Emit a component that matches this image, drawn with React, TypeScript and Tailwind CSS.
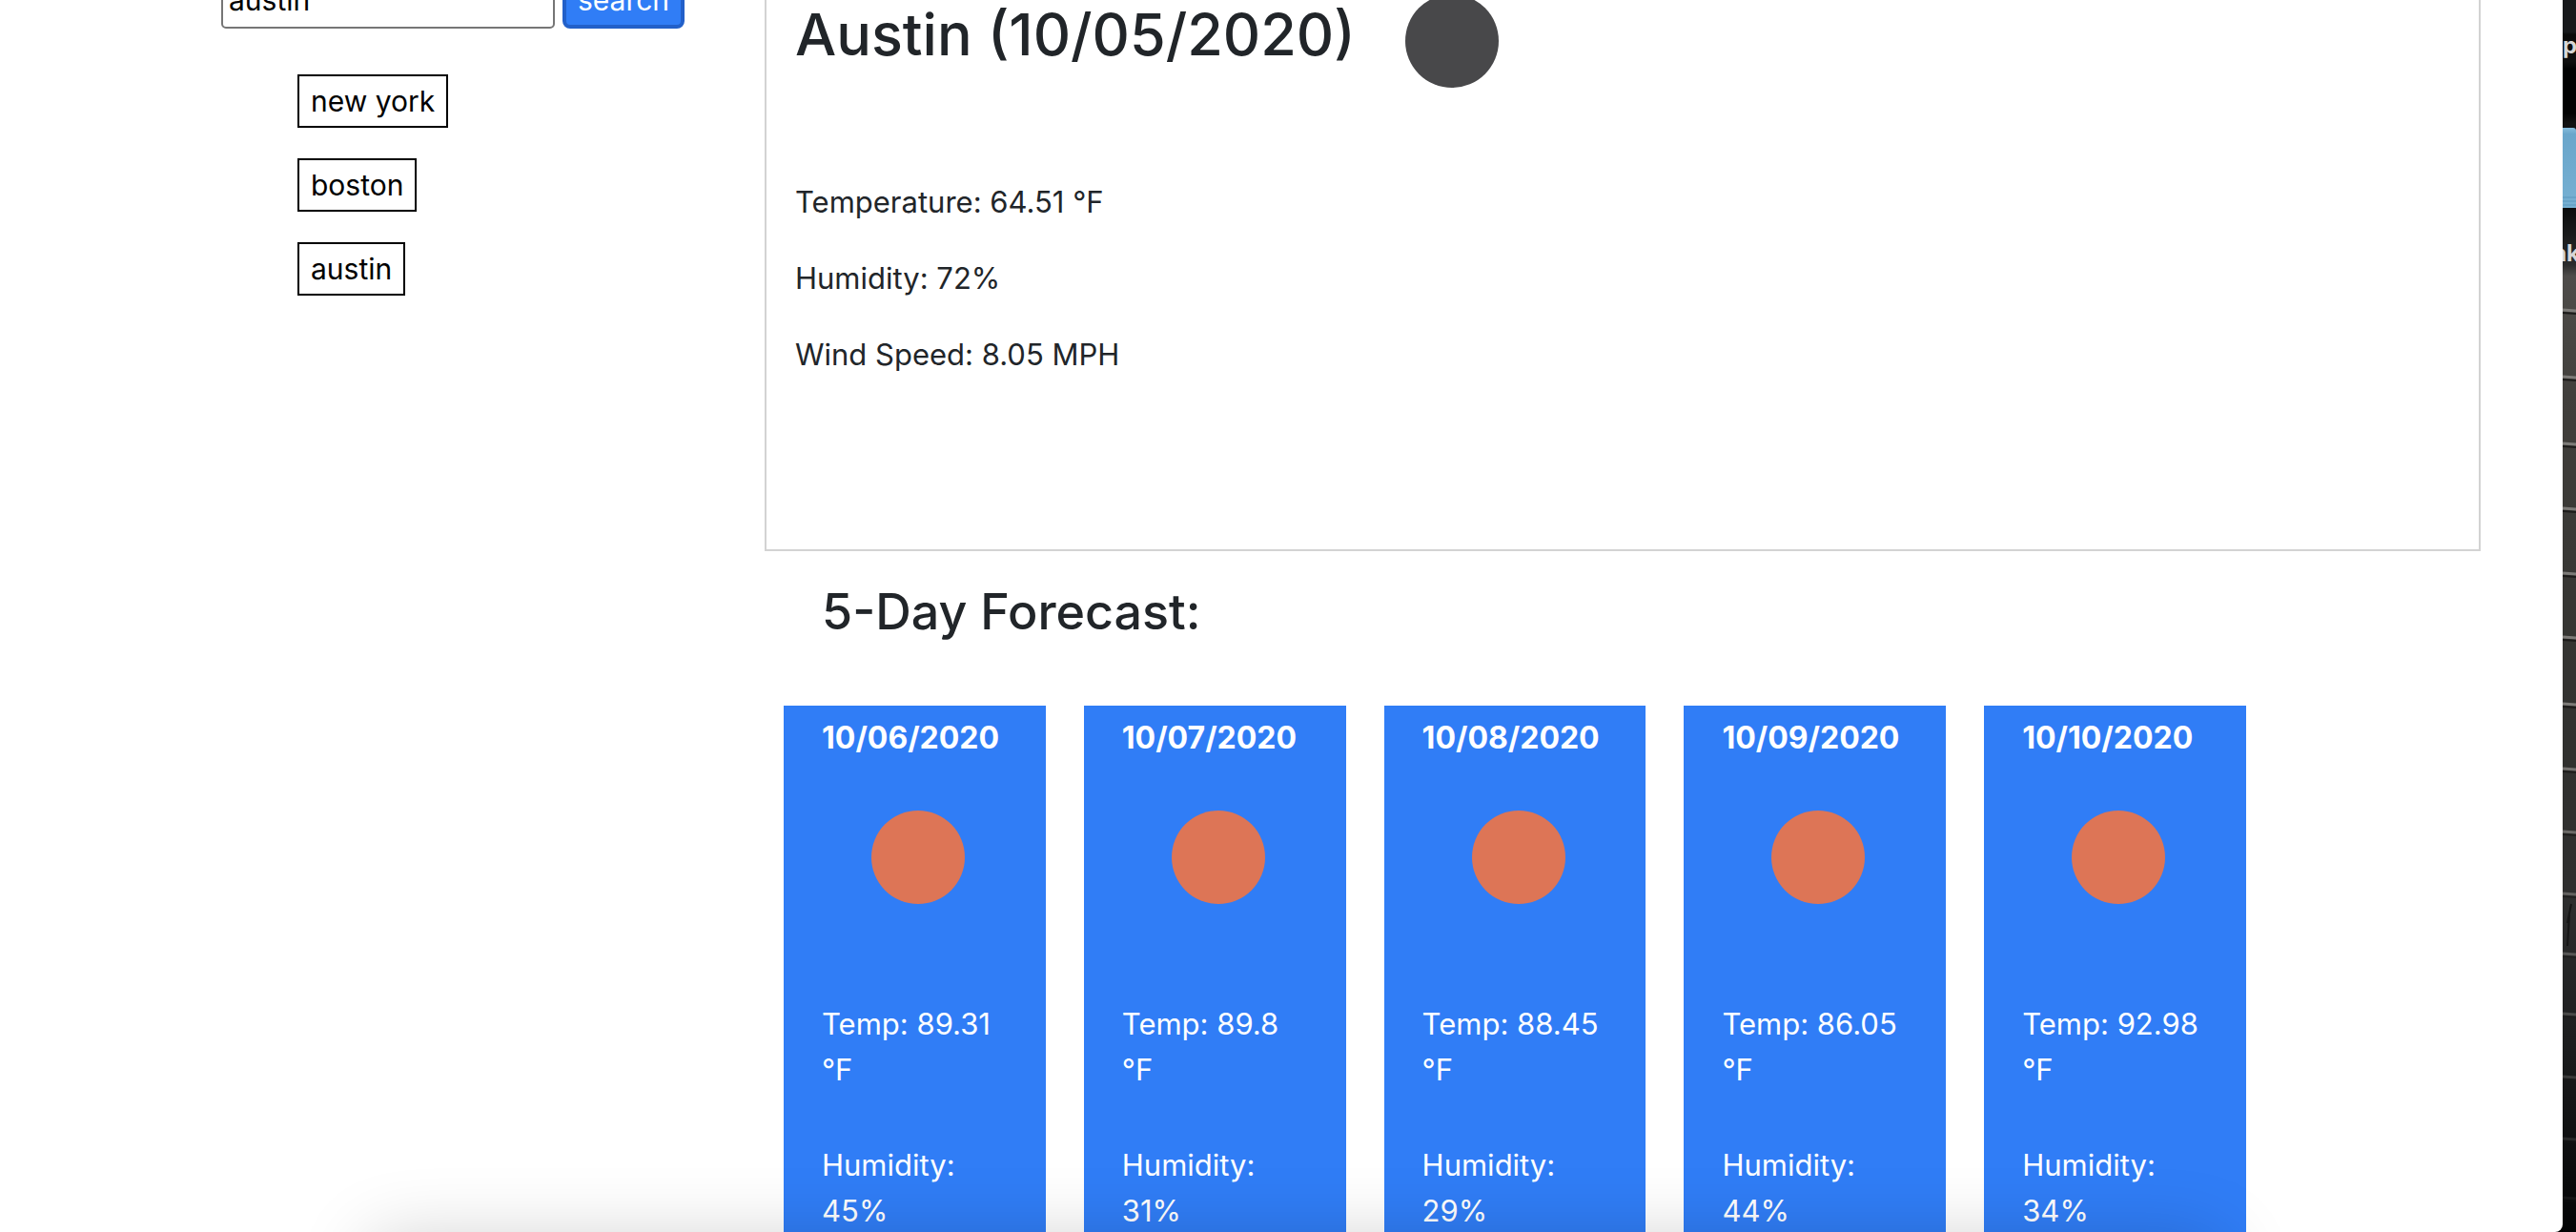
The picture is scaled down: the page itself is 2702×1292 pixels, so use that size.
import { useState } from "react";

type Day = { date: string; temp: string; humidity: string };

const cities = ["new york", "boston", "austin"];

const days: Day[] = [
  { date: "10/06/2020", temp: "89.31", humidity: "45" },
  { date: "10/07/2020", temp: "89.8", humidity: "31" },
  { date: "10/08/2020", temp: "88.45", humidity: "29" },
  { date: "10/09/2020", temp: "86.05", humidity: "44" },
  { date: "10/10/2020", temp: "92.98", humidity: "34" },
];

const seams = [326, 396, 466, 534, 602, 669, 739, 807, 873, 938, 1001, 1064, 1130, 1195, 1257];

function WeatherIcon({ label, className }: { label: string; className: string }) {
  return (
    <svg viewBox="0 0 200 200" role="img" aria-label={label} className={`size-[200px] shrink-0 ${className}`}>
      <circle cx="101" cy="99" r="49" fill="currentColor" />
    </svg>
  );
}

function Search() {
  const [query, setQuery] = useState("austin");
  return (
    <form className="flex gap-2" onSubmit={(e) => e.preventDefault()}>
      <input
        aria-label="City"
        value={query}
        onChange={(e) => setQuery(e.target.value)}
        className="h-[60px] w-[350px] min-w-0 rounded-[5px] border-2 border-[#767676] bg-white px-1.5 text-black"
      />
      <button type="submit" className="h-[60px] w-32 shrink-0 rounded-lg border-4 border-[#2260c9] bg-[#307df6] text-white">
        search
      </button>
    </form>
  );
}

function DayCard({ day }: { day: Day }) {
  return (
    <li className="bg-[#307df6] px-10 pt-2.5 pb-10 text-white">
      <h3 className="text-[32px] leading-12 font-bold whitespace-nowrap">{day.date}</h3>
      <WeatherIcon label="Clear sky" className="mt-0.5 text-[#dd7556]" />
      <p className="mt-[50px]">Temp: {day.temp} °F</p>
      <p className="mt-13">Humidity: {day.humidity}%</p>
    </li>
  );
}

function Desktop() {
  return (
    <aside className="relative w-3.5 shrink-0 overflow-hidden bg-black">
      <svg className="absolute inset-0 size-full" viewBox="0 0 14 1292" preserveAspectRatio="none" aria-hidden="true">
        <defs>
          <linearGradient id="wall" x1="0" y1="0" x2="0" y2="1">
            <stop offset="0" stopColor="#17191b" />
            <stop offset="0.026" stopColor="#17191b" />
            <stop offset="0.028" stopColor="#0b0b0b" />
            <stop offset="0.05" stopColor="#0f0f0f" />
            <stop offset="0.056" stopColor="#010202" />
            <stop offset="0.092" stopColor="#020202" />
            <stop offset="0.1" stopColor="#121212" />
            <stop offset="0.17" stopColor="#0b0c0d" />
            <stop offset="0.215" stopColor="#2b2c2d" />
            <stop offset="0.224" stopColor="#4e4c4a" />
            <stop offset="0.25" stopColor="#4b4946" />
            <stop offset="0.32" stopColor="#413f3c" />
            <stop offset="0.45" stopColor="#393835" />
            <stop offset="0.6" stopColor="#31312f" />
            <stop offset="0.72" stopColor="#2f2f2f" />
            <stop offset="0.82" stopColor="#202122" />
            <stop offset="0.92" stopColor="#101112" />
            <stop offset="1" stopColor="#020304" />
          </linearGradient>
          <linearGradient id="folder" x1="0" y1="0" x2="0" y2="1">
            <stop offset="0" stopColor="#86bcdc" />
            <stop offset="0.08" stopColor="#6aa6cb" />
            <stop offset="1" stopColor="#76b0d2" />
          </linearGradient>
        </defs>
        <rect width="14" height="1292" fill="url(#wall)" />
        {seams.map((y, i) => (
          <g key={y} opacity={i < 7 ? 1 : 1 - (i - 6) * 0.11}>
            <path d={`M0 ${y - 1}L14 ${y}`} stroke="#7d7b78" strokeWidth="3" />
            <path d={`M0 ${y + 2}L14 ${y + 3}`} stroke="#1c1b1a" strokeWidth="2" />
          </g>
        ))}
        <path d="M5 968L9 948M5 992L7 960" stroke="#151515" strokeWidth="2" />
        <path d="M0 134H11Q14 134 14 137V218H0Z" fill="url(#folder)" />
        <path d="M0 207H14M0 211H14M0 215H14" stroke="#5b97bd" />
      </svg>
      <div className="relative flex flex-col text-2xl leading-8 font-bold text-[#d6d6d6]">
        <span className="mt-8">p</span>
        <span className="mt-[186px] flex justify-end">
          <span className="-mr-1">nk</span>
        </span>
      </div>
    </aside>
  );
}

export default function App() {
  return (
    <div className="relative flex h-screen overflow-hidden bg-black font-['Inter',sans-serif] text-[30px] leading-12 text-[#212529]">
      <div className="relative min-w-0 flex-1 overflow-hidden rounded-br-lg bg-white">
        <div className="-mt-[58px] flex">
          <aside className="w-[802px] shrink-0 pt-7 pl-[232px]">
            <Search />
            <ul className="mt-12 ml-20 flex flex-col items-start gap-8">
              {cities.map((city) => (
                <li key={city}>
                  <button type="button" className="block h-14 border-2 border-black bg-white px-3 text-black">
                    {city}
                  </button>
                </li>
              ))}
            </ul>
          </aside>
          <main className="min-w-0 flex-1 pr-[86px] text-[31px] leading-12">
            <section className="border-2 border-[#d3d3d3] px-[30px] pb-[180px]">
              <div className="flex items-center">
                <h1 className="pb-4 text-[61px] leading-[76px] font-medium whitespace-nowrap">Austin (10/05/2020)</h1>
                <WeatherIcon label="Clear night" className="text-[#48484a]" />
              </div>
              <div className="mt-11 flex flex-col gap-8">
                <p>Temperature: 64.51 °F</p>
                <p>Humidity: 72%</p>
                <p>Wind Speed: 8.05 MPH</p>
              </div>
            </section>
            <h2 className="mt-[30px] pl-[60px] text-[52px] leading-[68px] font-medium">5-Day Forecast:</h2>
            <ul className="mt-16 mr-[246px] ml-5 grid grid-cols-5 gap-10">
              {days.map((day) => (
                <DayCard key={day.date} day={day} />
              ))}
            </ul>
          </main>
        </div>
        <div className="pointer-events-none absolute top-full right-[360px] left-[390px] h-40 shadow-[0_10px_80px_rgba(0,0,0,0.2)]" />
      </div>
      <Desktop />
    </div>
  );
}
